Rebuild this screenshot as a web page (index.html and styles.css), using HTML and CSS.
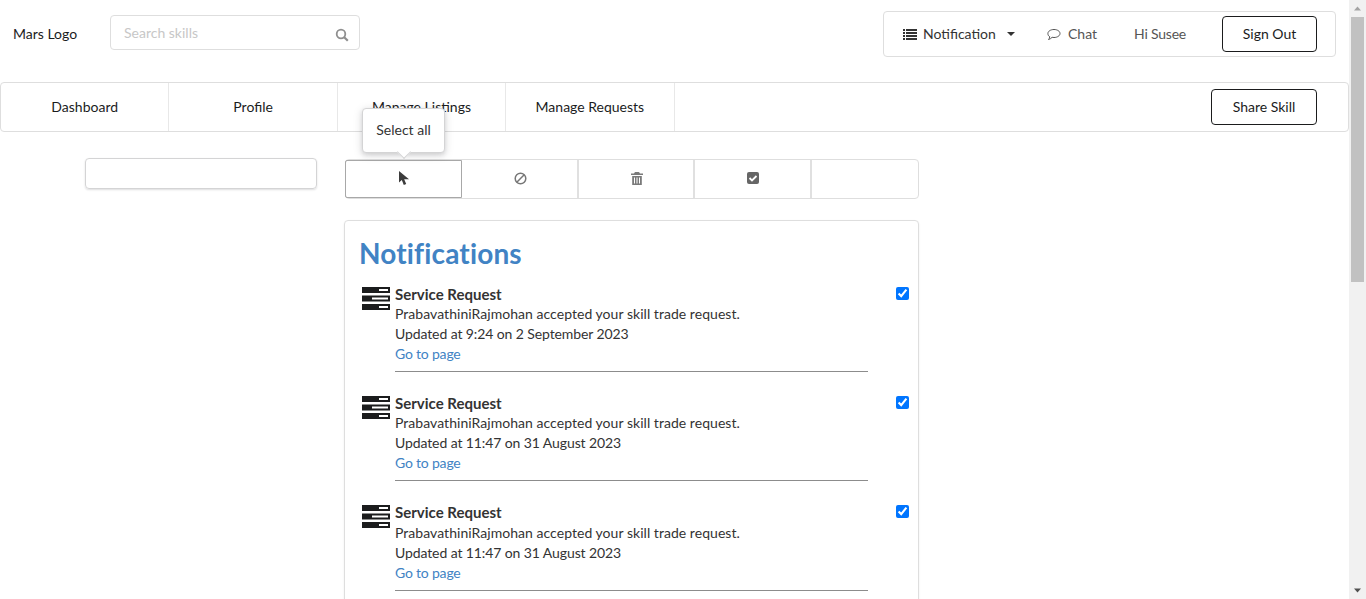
FILE: index.html
```html
<!DOCTYPE html>
<html lang="en">

<head>
	<meta charset="UTF-8">
	<meta name="viewport" content="width=device-width, initial-scale=1.0">
	<title>Notifications</title>
	<link rel="stylesheet" href="styles.css">
</head>

<body>
	<div class="page">
		<div class="content">
			<header class="topbar">
				<a class="logo">Mars Logo</a>
				<div class="search">
					<span class="placeholder">Search skills</span>
					<svg class="search-icon" viewBox="0 0 14 14" width="14" height="14">
						<circle cx="6" cy="6" r="4.3" fill="none" stroke="#8f8f8f" stroke-width="1.8" />
						<path d="M9.2 9.2l3.6 3.6" stroke="#8f8f8f" stroke-width="2.2" />
					</svg>
				</div>
				<div class="usermenu">
					<span class="usermenu-item notif">
						<svg viewBox="0 0 14 12" width="14" height="12" fill="#333">
							<path d="M0 1h2v2H0zM3 1h11v2H3zM0 4h2v2H0zM3 4h11v2H3zM0 7h2v2H0zM3 7h11v2H3zM0 10h2v2H0zM3 10h11v2H3z" />
						</svg>
						Notification
						<svg class="caret" viewBox="0 0 8 4" width="8" height="4"><path d="M0 0h8L4 4z" fill="#333" /></svg>
					</span>
					<span class="usermenu-item chat">
						<svg viewBox="0 0 14 13" width="14" height="13">
							<path d="M7 1.5c3.3 0 6 1.7 6 4s-2.7 4-6 4c-.7 0-1.300-.1-1.900-.2C4.200 10.400 2.800 11.200 1.500 11.500c.6-.7 1.200-1.600 1.300-2.700C1.400 8 .9 6.800.9 5.500c0-2.300 2.800-4 6.100-4z" fill="none" stroke="#555" stroke-width="1" />
						</svg>
						Chat
					</span>
					<span class="usermenu-item hi">Hi Susee</span>
					<a class="btn signout">Sign Out</a>
				</div>
			</header>

			<nav class="tabs">
				<a class="tab">Dashboard</a>
				<a class="tab">Profile</a>
				<a class="tab">Manage Listings</a>
				<a class="tab">Manage Requests</a>
				<a class="btn share">Share Skill</a>
			</nav>

			<main class="columns">
				<div class="side-box"></div>
				<div class="center">
					<div class="toolbar">
						<div class="tool active">
							<div class="tooltip">Select all</div>
							<svg viewBox="0 0 10 14" width="10" height="14">
								<path d="M0 0v11.500l2.800-2.500 2 5 2.400-1-2-4.800H10z" fill="#3c3c3c" />
							</svg>
						</div>
						<div class="tool">
							<svg viewBox="0 0 13 13" width="13" height="13">
								<circle cx="6.500" cy="6.500" r="5.300" fill="none" stroke="#777" stroke-width="1.500" />
								<path d="M2.800 10.200l7.400-7.400" stroke="#777" stroke-width="1.500" />
							</svg>
						</div>
						<div class="tool">
							<svg viewBox="0 0 12 13" width="12" height="13" fill="#7a7a7a">
								<path d="M4 0h4l1 1.500h3V3H0V1.500h3zM1.200 4h9.600v9H1.200zM3 5.500v6h1v-6zM5.500 5.500v6h1v-6zM8 5.500v6h1v-6z" fill-rule="evenodd" />
							</svg>
						</div>
						<div class="tool">
							<svg viewBox="0 0 12 12" width="12" height="12">
								<rect width="12" height="12" rx="2" fill="#666" />
								<path d="M2.500 6l2.500 2.500 4.500-4.500" fill="none" stroke="#fff" stroke-width="1.800" />
							</svg>
						</div>
						<div class="tool last"></div>
					</div>

					<section class="card">
						<h1>Notifications</h1>

						<article class="note">
							<svg class="server" viewBox="0 0 28 23" width="28" height="23">
								<path fill-rule="evenodd" fill="#1b1c1d" d="M0 0h28v6H0zM17 2v2h9V2zM0 8.500h28v6H0zM10 10.500v2h16v-2zM0 17h28v6H0zM17 19v2h9v-2z" />
							</svg>
							<div class="note-body">
								<h2>Service Request</h2>
								<p>PrabavathiniRajmohan accepted your skill trade request.</p>
								<p class="stamp">Updated at 9:24 on 2 September 2023</p>
								<a class="go">Go to page</a>
								<hr>
							</div>
							<input class="tick" type="checkbox" checked>
						</article>

						<article class="note">
							<svg class="server" viewBox="0 0 28 23" width="28" height="23">
								<path fill-rule="evenodd" fill="#1b1c1d" d="M0 0h28v6H0zM17 2v2h9V2zM0 8.500h28v6H0zM10 10.500v2h16v-2zM0 17h28v6H0zM17 19v2h9v-2z" />
							</svg>
							<div class="note-body">
								<h2>Service Request</h2>
								<p>PrabavathiniRajmohan accepted your skill trade request.</p>
								<p class="stamp">Updated at 11:47 on 31 August 2023</p>
								<a class="go">Go to page</a>
								<hr>
							</div>
							<input class="tick" type="checkbox" checked>
						</article>

						<article class="note">
							<svg class="server" viewBox="0 0 28 23" width="28" height="23">
								<path fill-rule="evenodd" fill="#1b1c1d" d="M0 0h28v6H0zM17 2v2h9V2zM0 8.500h28v6H0zM10 10.500v2h16v-2zM0 17h28v6H0zM17 19v2h9v-2z" />
							</svg>
							<div class="note-body">
								<h2>Service Request</h2>
								<p>PrabavathiniRajmohan accepted your skill trade request.</p>
								<p class="stamp">Updated at 11:47 on 31 August 2023</p>
								<a class="go">Go to page</a>
								<hr>
							</div>
							<input class="tick" type="checkbox" checked>
						</article>
					</section>
				</div>
			</main>
		</div>

		<div class="scrollbar">
			<svg viewBox="0 0 17 17" width="17" height="17"><path d="M5 10.500h7L8.500 6.500z" fill="#a3a3a3" /></svg>
			<div class="thumb"></div>
			<div class="track"></div>
			<svg viewBox="0 0 17 17" width="17" height="17"><path d="M5 6.500h7L8.500 10.500z" fill="#505050" /></svg>
		</div>
	</div>
</body>

</html>
```

FILE: styles.css
```css
html,
body {
	margin: 0;
	height: 100%;
	overflow: hidden;
}

body {
	font-family: Lato, "Open Sans", sans-serif;
	font-size: 14px;
	line-height: 20px;
	color: #333;
	background-color: #fff;
}

.page {
	display: flex;
	height: 599px;
	overflow: hidden;
}

.content {
	flex: 1;
	min-width: 0;
}

.scrollbar {
	width: 17px;
	display: flex;
	flex-direction: column;
	background-color: #f1f1f1;
}

.thumb {
	height: 265px;
	margin: 0 2px;
	background-color: #c1c1c1;
}

.track {
	flex: 1;
}

/* top bar */
.topbar {
	height: 82px;
	display: flex;
	align-items: flex-start;
	box-sizing: border-box;
	padding: 11px 13px 0 13px;
}

.logo {
	color: #1b1c1d;
	margin-top: 13px;
	width: 97px;
}

.search {
	width: 250px;
	height: 35px;
	margin-top: 4px;
	box-sizing: border-box;
	border: 1px solid #dedede;
	border-radius: 4px;
	display: flex;
	align-items: center;
	justify-content: space-between;
	padding: 0 10px 0 13px;
}

.placeholder {
	color: #c7c7c7;
}

.search-icon {
	margin-top: 4px;
}

.usermenu {
	margin-left: auto;
	width: 453px;
	height: 46px;
	box-sizing: border-box;
	border: 1px solid #dedede;
	border-radius: 4px;
	display: flex;
	align-items: center;
	padding-left: 19px;
}

.usermenu-item {
	display: inline-flex;
	align-items: center;
	gap: 6px;
	white-space: nowrap;
	color: #555;
}

.notif {
	color: #333;
	width: 144px;
}

.caret {
	margin-left: 5px;
}

.chat {
	width: 87px;
	gap: 7px;
}

.hi {
	width: 88px;
	letter-spacing: -.2px;
}

.btn {
	display: flex;
	align-items: center;
	justify-content: center;
	box-sizing: border-box;
	height: 36px;
	border: 1px solid #1b1c1d;
	border-radius: 4px;
	color: #1b1c1d;
}

.signout {
	width: 95px;
}

/* main menu */
.tabs {
	height: 50px;
	box-sizing: border-box;
	border: 1px solid #dedede;
	border-radius: 4px;
	display: flex;
	align-items: center;
}

.tab {
	width: 168.400px;
	height: 100%;
	box-sizing: border-box;
	border-right: 1px solid #e8e8e8;
	display: flex;
	align-items: center;
	justify-content: center;
	color: #1b1c1d;
}

.share {
	width: 106px;
	margin-left: auto;
	margin-right: 31px;
}

/* columns */
.columns {
	display: flex;
	align-items: flex-start;
	padding: 26px 0 0 85px;
	gap: 27px;
}

.side-box {
	width: 232px;
	height: 31px;
	box-sizing: border-box;
	border: 1px solid #d4d4d5;
	border-radius: 4px;
	box-shadow: 0 1px 2px rgba(34, 36, 38, .15);
}

.center {
	width: 575px;
}

.toolbar {
	margin: 1px 0 21px 1px;
	height: 40px;
	box-sizing: border-box;
	display: flex;
	border: 1px solid #dedede;
	border-radius: 4px;
}

.tool {
	position: relative;
	width: 116.500px;
	box-sizing: border-box;
	padding-left: 2px;
	border-right: 2px solid #e0e0e0;
	display: flex;
	align-items: center;
	justify-content: center;
}

.tool svg {
	margin-top: -2px;
}

.tool.active {
	width: 117px;
	padding-left: 0;
	margin-left: -1px;
	border: 1px solid #a8a8a8;
	border-radius: 2px 0 0 2px;
}

.tool.last {
	flex: 1;
	border-right: none;
}

.tooltip {
	position: absolute;
	left: 16px;
	bottom: 44px;
	width: 83px;
	height: 45px;
	box-sizing: border-box;
	padding-bottom: 2px;
	display: flex;
	align-items: center;
	justify-content: center;
	background-color: #fff;
	border: 1px solid #d4d4d5;
	border-radius: 4px;
	box-shadow: 0 2px 4px rgba(34, 36, 38, .12), 0 2px 10px rgba(34, 36, 38, .15);
}

.tooltip::after {
	content: "";
	position: absolute;
	left: 36px;
	bottom: -5px;
	width: 9px;
	height: 9px;
	background-color: #fff;
	border-right: 1px solid #d4d4d5;
	border-bottom: 1px solid #d4d4d5;
	transform: rotate(45deg);
}

/* notifications card */
.card {
	box-sizing: border-box;
	border: 1px solid #dedede;
	border-radius: 4px;
	padding: 14px 9px 0 14px;
	height: 500px;
	box-shadow: 0 1px 2px rgba(34, 36, 38, .08);
}

h1 {
	margin: 0 0 12.600px;
	font-size: 28px;
	line-height: 36px;
	font-weight: 700;
	letter-spacing: .15px;
	color: #4183c4;
}

.note {
	display: flex;
	align-items: flex-start;
	height: 109.300px;
}

.server {
	margin: 3px 5px 0 3px;
	flex: none;
}

.note-body {
	width: 473px;
}

h2 {
	margin: 0;
	font-size: 15px;
	line-height: 20.400px;
	font-weight: 700;
	color: #333;
}

p {
	margin: 0;
	letter-spacing: .04px;
}

.stamp {
	letter-spacing: -.1px;
}

.go {
	color: #4183c4;
	letter-spacing: -.2px;
}

hr {
	margin: 7px 0 0;
	border: none;
	border-top: 1px solid #8c8c8c;
}

.tick {
	margin: 3px 0 0 28px;
	flex: none;
}
```
